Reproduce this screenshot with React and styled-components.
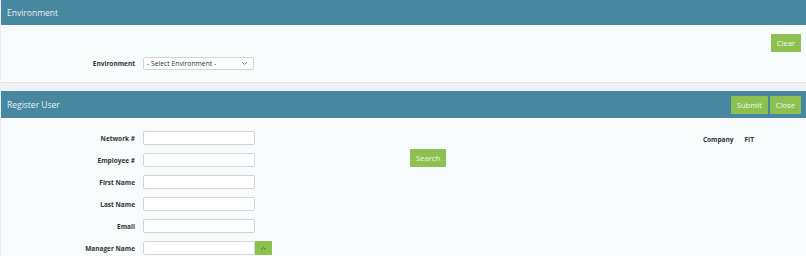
import React from 'react';
import styled, { createGlobalStyle } from 'styled-components';

const GlobalStyle = createGlobalStyle`
  html, body {
    margin: 0;
    padding: 0;
    background: #eef2f5;
    font-family: 'Open Sans', 'Noto Sans', sans-serif;
  }
`;

const Page = styled.div`
  display: flex;
  flex-direction: column;
  gap: 9px;
  padding-left: 1px;
  width: 805px;
  height: 256px;
  overflow: hidden;
`;

const Panel = styled.section`
  background: #f7fbfc;
  box-shadow: 0 1px 1px rgba(0, 0, 0, 0.06);
`;

const Header = styled.div`
  display: flex;
  align-items: center;
  justify-content: space-between;
  height: ${p => p.h || 25}px;
  padding: 0 5px 0 6px;
  background: #47879f;
  color: #e8f1f4;
  font-size: 8.5px;
`;

const Actions = styled.div`
  display: flex;
  gap: 2px;
`;

const Button = styled.button`
  height: 18px;
  padding: 0 ${p => p.px || 6}px;
  border: none;
  border-radius: 1px;
  background: #8cc152;
  color: #f4f9ee;
  font-family: inherit;
  font-size: 7.6px;
  cursor: pointer;
`;

const EnvBody = styled.div`
  display: flex;
  flex-direction: column;
  padding: 9px 5px 12px 0;
`;

const TopRight = styled.div`
  display: flex;
  justify-content: flex-end;
`;

const Field = styled.div`
  display: grid;
  grid-template-columns: 134px auto;
  column-gap: 8px;
  align-items: center;
  margin-top: ${p => p.mt || 0}px;
`;

const Label = styled.label`
  text-align: right;
  font-size: 6.5px;
  font-weight: 700;
  color: #333;
`;

const Select = styled.div`
  display: flex;
  align-items: center;
  justify-content: space-between;
  box-sizing: border-box;
  width: 111px;
  height: 13px;
  padding: 0 5px 0 3px;
  background: #fff;
  border: 1px solid #cfd6da;
  border-radius: 2px;
  font-size: 6.8px;
  color: #333;
`;

const RegBody = styled.div`
  display: flex;
  align-items: flex-start;
  padding-top: 13px;
  height: 140px;
`;

const Form = styled.div`
  display: flex;
  flex-direction: column;
  gap: 8px;
`;

const Input = styled.input`
  box-sizing: border-box;
  width: ${p => p.w || 112}px;
  height: 14px;
  margin: 0;
  border: 1px solid #cfd6da;
  border-radius: 2px;
  background: #fff;
`;

const Combo = styled.div`
  display: flex;
  align-items: center;
`;

const ComboButton = styled.div`
  display: flex;
  align-items: center;
  justify-content: center;
  width: 17px;
  height: 14px;
  background: #8cc152;
`;

const SearchCol = styled.div`
  display: flex;
  padding-top: 18px;
  margin-left: 138px;
`;

const CompanyCol = styled.div`
  display: flex;
  gap: 11px;
  margin-left: auto;
  margin-right: 52px;
  padding-top: 4px;
  font-size: 6.5px;
  font-weight: 700;
  color: #333;
`;

const Chevron = ({ up, color }) => (
  <svg width="7" height="5" viewBox="0 0 7 5">
    <path d={up ? 'M1 4 L3.5 1.5 L6 4' : 'M1 1 L3.5 3.5 L6 1'} fill="none" stroke={color} strokeWidth="0.8" />
  </svg>
);

const fields = ['Network #', 'Employee #', 'First Name', 'Last Name', 'Email'];

export default function App() {
  return (
    <>
      <GlobalStyle />
      <Page>
        <Panel>
          <Header>Environment</Header>
          <EnvBody>
            <TopRight>
              <Button px={6}>Clear</Button>
            </TopRight>
            <Field mt={5}>
              <Label>Environment</Label>
              <Select>
                <span>- Select Environment -</span>
                <Chevron color="#666" />
              </Select>
            </Field>
          </EnvBody>
        </Panel>
        <Panel>
          <Header h={27}>
            <span>Register User</span>
            <Actions>
              <Button>Submit</Button>
              <Button>Close</Button>
            </Actions>
          </Header>
          <RegBody>
            <Form>
              {fields.map(f => (
                <Field key={f}>
                  <Label>{f}</Label>
                  <Input />
                </Field>
              ))}
              <Field>
                <Label>Manager Name</Label>
                <Combo>
                  <Input />
                  <ComboButton>
                    <Chevron up color="#3f6b1f" />
                  </ComboButton>
                </Combo>
              </Field>
            </Form>
            <SearchCol>
              <Button px={6}>Search</Button>
            </SearchCol>
            <CompanyCol>
              <span>Company</span>
              <span>FIT</span>
            </CompanyCol>
          </RegBody>
        </Panel>
      </Page>
    </>
  );
}
